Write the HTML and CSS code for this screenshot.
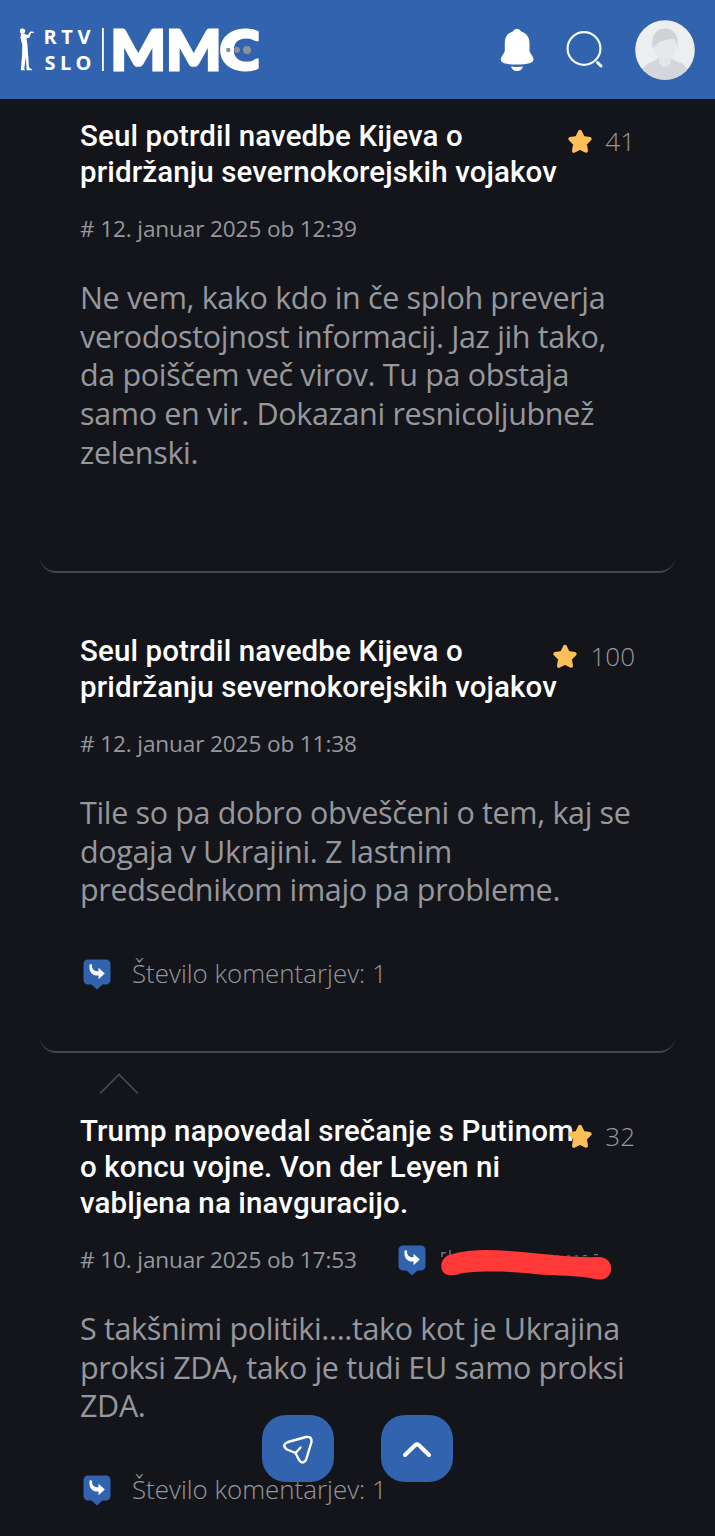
FILE: index.html
```html
<!DOCTYPE html>
<html lang="sl">
<head>
<meta charset="utf-8">
<title>RTV SLO MMC</title>
<link rel="stylesheet" href="styles.css">
</head>
<body>
<svg width="0" height="0" class="defs">
  <symbol id="star" viewBox="0 0 26 26"><path d="M13 2.800 L15.900 8.900 L22.700 9.900 L17.800 14.700 L19 21.800 L13 18.800 L7 21.800 L8.200 14.700 L3.300 9.900 L10.100 8.900 Z" fill="#fdbf57" stroke="#fdbf57" stroke-width="4" stroke-linejoin="round"/></symbol>
  <symbol id="reply" viewBox="0 0 28 31"><path d="M5 .5H23a4.500 4.500 0 0 1 4.500 4.500V21a4.500 4.500 0 0 1-4.500 4.500H19.500L14 30.500L8.500 25.500H5A4.500 4.500 0 0 1 .5 21V5A4.500 4.500 0 0 1 5 .5Z" fill="#3263ae"/><path d="M6.600 5.500C7.200 5.200 8.800 5.300 9 6C9 10 10.500 12.300 15.500 12.300V8.800L21.800 14.600L15.500 20.200V16.600C9 16.800 5.600 13 6.600 5.500Z" fill="#fff"/></symbol>
</svg>
<header class="header">
  <svg class="logo" width="250" height="60" viewBox="15 20 250 60">
    <g fill="#fff">
      <circle cx="22.500" cy="31.200" r="2.600"/>
      <path d="M21 33.500L24.500 34L28 35L30 31.500L34 31.800V32.800L31 33L29.500 37.500L26.500 38.500L27.500 45L28.200 56L29 67.500L32.200 69.500V70.300H26.700L25.800 57L24.300 68.500L25 70.300H20.800L22 56L22.300 45L20.500 38Z"/>
      <path d="M20 28.500L25 29.500L23 30.500Z"/>
      <rect x="102" y="28" width="1.800" height="43"/>
    </g>
    <text class="logo-small" x="43.500" y="44" textLength="47" lengthAdjust="spacing">RTV</text>
    <text class="logo-small" x="44.500" y="69.500" textLength="47" lengthAdjust="spacing">SLO</text>
    <text class="logo-big" x="110.500" y="69.500" textLength="111" lengthAdjust="spacingAndGlyphs">MM</text>
    <text class="logo-big" x="219.500" y="69.500" textLength="44" lengthAdjust="spacingAndGlyphs">C</text>
    <rect x="258.700" y="25" width="10" height="50" fill="#3263ae"/>
    <g fill="#8b9097"><circle cx="228.300" cy="50" r="2.200"/><circle cx="237" cy="50" r="3"/><circle cx="247" cy="50" r="4"/></g>
  </svg>
  <nav class="actions">
    <svg width="34" height="44" viewBox="0 0 34 44"><path d="M17 1c2.500 0 3.500 1.500 4.200 2.400C26.500 5 29.500 9 29.500 15v7c0 4 4 5.500 4 9.500C33.500 35 28 36.500 17 36.500S.8 35 .8 31.500c0-4 4-5.500 4-9.500v-7c0-6 2.700-10 8-11.600C13.500 2.500 14.500 1 17 1Z" fill="#fff"/><path d="M11 38.500Q17 39.300 23 38.500Q21.500 43 17 43T11 38.500Z" fill="#fff"/></svg>
    <svg class="search" width="40" height="40" viewBox="0 0 40 40" fill="none" stroke="#f3fbff" stroke-linecap="round"><circle cx="19" cy="18.500" r="16.400" stroke-width="2.200"/><path d="M32.500 32.500L36 36" stroke-width="3"/></svg>
    <svg width="60" height="60" viewBox="0 0 60 60">
      <defs><clipPath id="av"><circle cx="30" cy="30" r="29.800"/></clipPath></defs>
      <g clip-path="url(#av)"><rect width="60" height="60" fill="#eceef0"/><path d="M8 49C11 42 18 43 24 38H36C42 43 49 42 52 49V60H8Z" fill="#d3d6da"/><path d="M24 34H36V43Q30 51 24 43Z" fill="#e3e5e8"/><ellipse cx="30" cy="25" rx="11.500" ry="14" fill="#e6e8ea"/><path d="M17.500 28C16 15 21 8.500 30 8.500S44 15 42.500 28C41.500 24 41 21 39 19C32 19 24 21 19.500 26Z" fill="#cfd2d6"/></g>
    </svg>
  </nav>
</header>
<main>
  <article class="comment">
    <div class="score"><svg width="26" height="26"><use href="#star"/></svg><span>41</span></div>
    <h2>Seul potrdil navedbe Kijeva o<br>pridržanju severnokorejskih vojakov</h2>
    <div class="meta"><span class="date"># 12. januar 2025 ob 12:39</span></div>
    <p>Ne vem, kako kdo in če sploh preverja<br>verodostojnost informacij. Jaz jih tako,<br>da poiščem več virov. Tu pa obstaja<br>samo en vir. Dokazani resnicoljubnež<br>zelenski.</p>
  </article>
  <article class="comment">
    <div class="score"><svg width="26" height="26"><use href="#star"/></svg><span>100</span></div>
    <h2>Seul potrdil navedbe Kijeva o<br>pridržanju severnokorejskih vojakov</h2>
    <div class="meta"><span class="date"># 12. januar 2025 ob 11:38</span></div>
    <p>Tile so pa dobro obveščeni o tem, kaj se<br>dogaja v Ukrajini. Z lastnim<br>predsednikom imajo pa probleme.</p>
    <div class="replies"><svg width="28" height="31"><use href="#reply"/></svg><span>Število komentarjev: 1</span></div>
  </article>
  <article class="comment">
    <svg class="caret" width="40" height="22" viewBox="0 0 40 22"><path d="M1 20.500L20 1.500L39 20.500" fill="none" stroke="#4a4b4f" stroke-width="1.600"/></svg>
    <div class="score"><svg width="26" height="26"><use href="#star"/></svg><span>32</span></div>
    <h2>Trump napovedal srečanje s Putinom<br>o koncu vojne. Von der Leyen ni<br>vabljena na inavguracijo.</h2>
    <div class="meta"><span class="date"># 10. januar 2025 ob 17:53</span><svg width="28" height="31"><use href="#reply"/></svg>
      <svg class="redaction" width="174" height="36" viewBox="0 0 174 36"><path d="M3 8v-5M3 5q2-2 4-1M11 1v6M44 2h4M117 7h3M128 7h3M136 7h3M144 7q2-1 4 0M155 6q2-1 4 0" stroke="#85868a" stroke-width="1.200" fill="none"/><path d="M10 6C30 0 50 .5 70 2C100 4 132 9 160 8C168 8 173 14 172 21C171 29 164 32 156 30C138 26 117 27 96 25C68 22 47 22 24 24C14 27 9 27 5 24C0 19 2 9 10 6Z" fill="#ff3838"/></svg>
    </div>
    <p>S takšnimi politiki....tako kot je Ukrajina<br>proksi ZDA, tako je tudi EU samo proksi<br>ZDA.</p>
    <div class="replies"><svg width="28" height="31"><use href="#reply"/></svg><span>Število komentarjev: 1</span></div>
  </article>
</main>
<div class="floating">
  <button><svg width="32" height="32" viewBox="0 0 32 32" fill="none" stroke="#fff" stroke-width="2.400" stroke-linecap="round" stroke-linejoin="round"><path d="M6 9L24 4Q30 3 29.500 9L24 27Q20.500 32 17 27L13.500 20L5 16.500Q-1 12 6 9ZM13.500 20L18.500 14.500"/></svg></button>
  <button><svg width="32" height="32" viewBox="0 0 32 32" fill="none" stroke="#fff" stroke-width="4" stroke-linecap="round" stroke-linejoin="round"><path d="M4 22L14 12.200Q16 10.500 18 12.200L28 22"/></svg></button>
</div>
</body>
</html>
```
FILE: styles.css
```css
* { box-sizing: border-box; }
body { margin: 0; height: 1536px; overflow: hidden; background: #14151a; color: #97989d; font-family: "Open Sans", sans-serif; }
svg { display: block; flex: none; }
.defs { position: absolute; }
.header { height: 99px; padding: 0 20px 0 15px; display: flex; align-items: center; justify-content: space-between; background: #3263ae; }
.logo { overflow: visible; }
.logo-small { font: 700 20px "Open Sans", sans-serif; fill: #fff; }
.logo-big { font: 900 56px Lato, sans-serif; fill: #fff; stroke: #fff; stroke-width: 2.800px; }
.actions { display: flex; align-items: center; gap: 31px; }
.search { margin: 0 -1px 0 0; }
main { padding: 0 40px; }
.comment { position: relative; padding: 60px 40px 0; border-bottom: 2px solid #45464a; border-radius: 0 0 16px 16px; }
.comment:nth-child(1) { height: 474px; padding-top: 19px; }
.comment:nth-child(2) { height: 480px; }
.comment:nth-child(3) { border: 0; }
h2 { margin: 0; font: 500 29.500px/36px Roboto, sans-serif; letter-spacing: .12px; color: #fff; white-space: nowrap; }
.score { position: absolute; top: 66px; right: 40px; display: flex; align-items: center; gap: 12px; font-size: 26px; line-height: 34px; font-weight: 300; }
.score svg { margin-top: 1px; }
.comment:nth-child(1) .score { top: 25px; }
.meta { display: flex; align-items: center; height: 30px; margin-top: 24px; font-size: 22.600px; line-height: 30px; letter-spacing: -.13px; white-space: nowrap; }
.date { width: 318px; }
.redaction { margin-left: 13px; margin-top: 13px; }
p { margin: 34px 0 0; font-size: 30.500px; line-height: 38.7px; letter-spacing: -.35px; white-space: nowrap; }
.replies { display: flex; align-items: center; gap: 21px; height: 34px; margin-top: 47px; padding-left: 3px; font-size: 25.900px; font-weight: 300; }
.replies svg { margin-top: 3px; }
.caret { position: absolute; left: 59px; top: 20px; }
.floating { position: fixed; top: 1415px; left: 262px; display: flex; gap: 47px; }
.floating button { width: 72px; height: 67px; padding: 0; border: 0; border-radius: 24px; background: #3263ae; display: flex; align-items: center; justify-content: center; }
```
